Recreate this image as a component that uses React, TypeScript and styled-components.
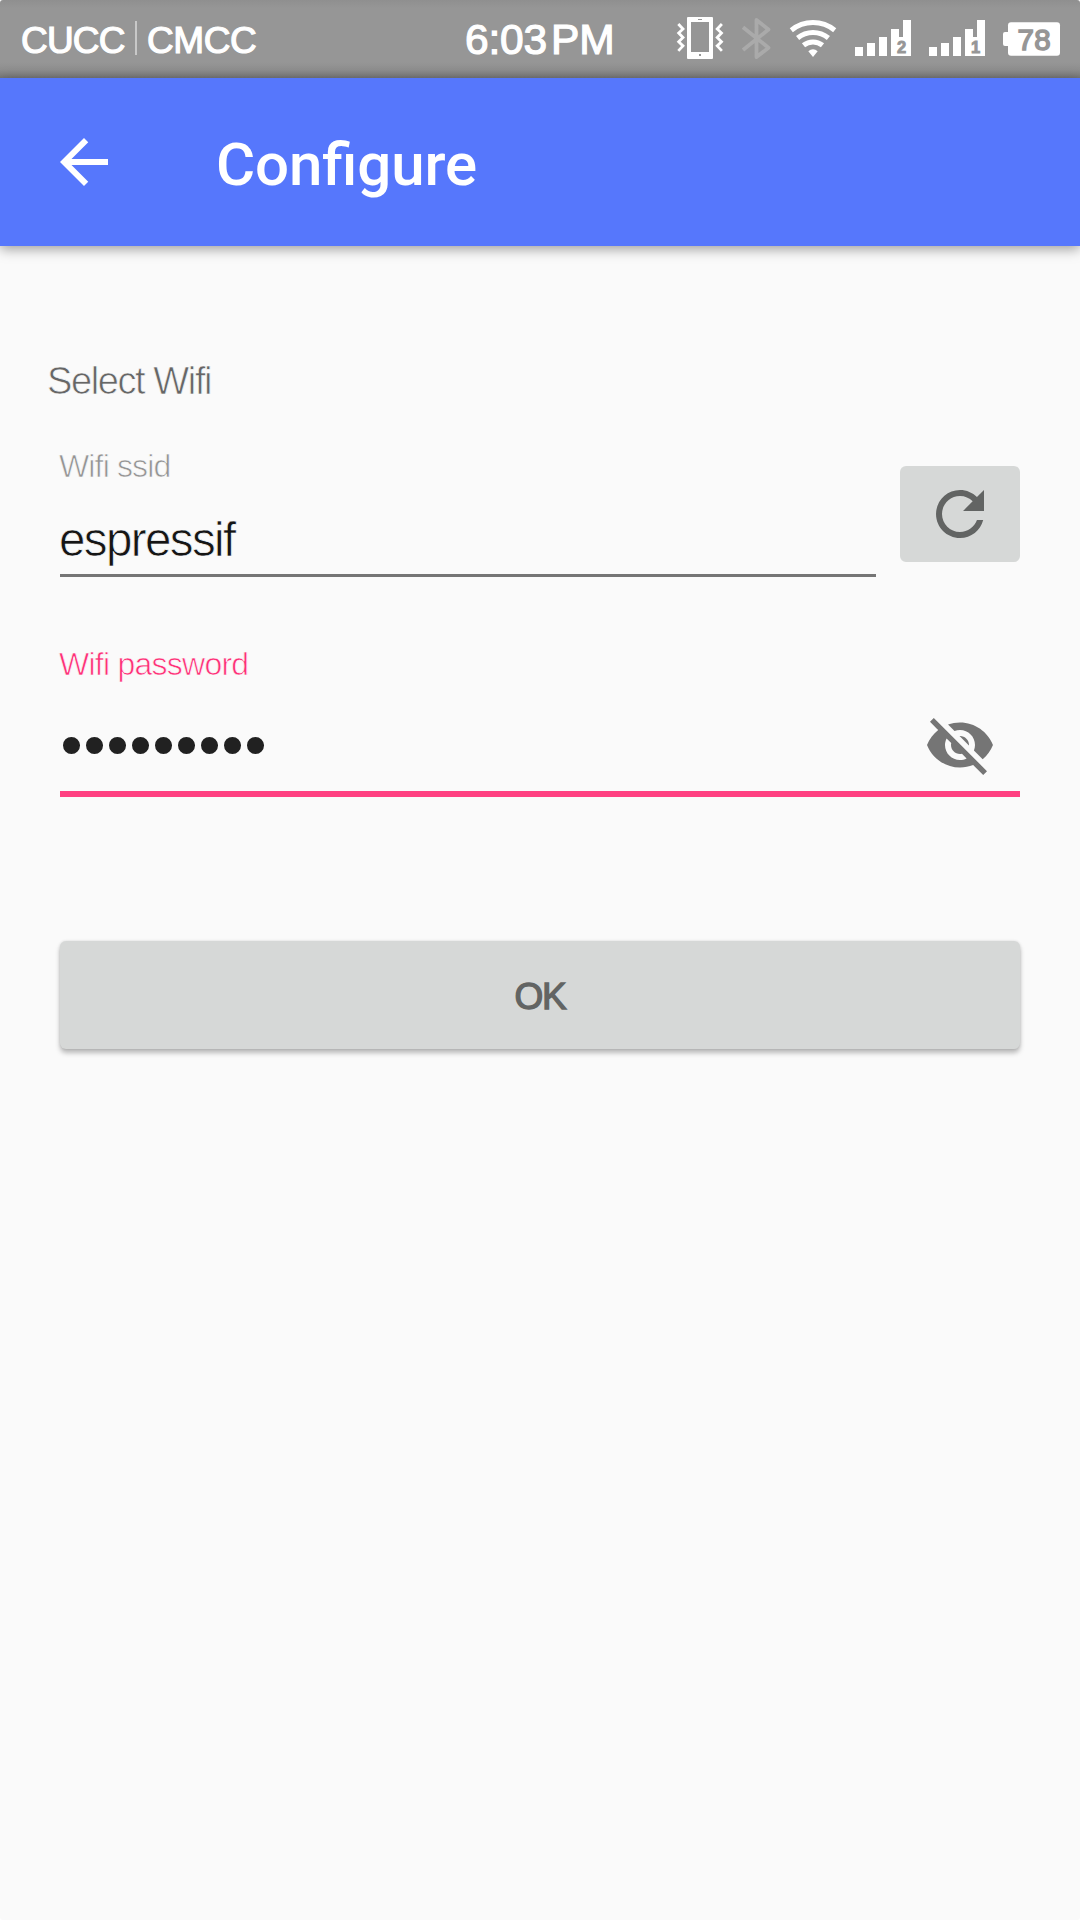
import React from "react";
import styled, { createGlobalStyle } from "styled-components";

const GlobalStyle = createGlobalStyle`
  * { box-sizing: border-box; }
  html, body { margin: 0; padding: 0; background: #fff; }
  svg { display: block; flex: none; }
`;

const SANS = `"Liberation Sans", Arial, sans-serif`;

const Screen = styled.div`
  width: 1080px;
  height: 1920px;
  display: flex;
  flex-direction: column;
  background: #fafafa;
  border-radius: 3px;
  overflow: hidden;
  font-family: ${SANS};
`;

const StatusBar = styled.header`
  height: 78px;
  flex: none;
  display: flex;
  padding-left: 21px;
  color: #fff;
  background: linear-gradient(
    to bottom,
    #8f8f8f 0,
    #969696 8px,
    #969696 62px,
    #8e8e8e 70px,
    #797979 78px
  );
`;

const StatusText = styled.span<{ $size: number; $width: number; $spacing?: number; $line?: number }>`
  width: ${(p) => p.$width}px;
  flex: none;
  font-size: ${(p) => p.$size}px;
  line-height: ${(p) => p.$line ?? 80}px;
  height: 78px;
  letter-spacing: ${(p) => p.$spacing ?? 0}px;
  white-space: nowrap;
  -webkit-text-stroke: 1.2px #fff;
`;

const Divider = styled.i`
  width: 2px;
  height: 34px;
  flex: none;
  margin: 21px 10px 0 8px;
  background: #c8c8c8;
`;

const StatusIcons = styled.div`
  display: flex;
  flex: none;
  margin-left: auto;
`;

const Toolbar = styled.nav`
  height: 168px;
  flex: none;
  display: flex;
  align-items: center;
  padding-left: 48px;
  background: #5677fc;
  box-shadow: 0 3px 12px rgba(0, 0, 0, 0.38);
`;

const Title = styled.h1`
  margin: 5px 0 0 96px;
  font-family: Roboto, sans-serif;
  font-size: 60px;
  line-height: 70px;
  font-weight: 500;
  letter-spacing: -0.1px;
  font-feature-settings: "liga" 1;
  color: #fff;
`;

const Form = styled.main`
  display: flex;
  flex-direction: column;
  padding: 115px 60px 0;
`;

const Thin = styled.span<{ $size: number; $line: number; $color: string; $spacing: number }>`
  display: block;
  margin-left: -1px;
  font-size: ${(p) => p.$size}px;
  line-height: ${(p) => p.$line}px;
  letter-spacing: ${(p) => p.$spacing}px;
  color: ${(p) => p.$color};
  white-space: nowrap;
  font-feature-settings: "liga" 1;
  -webkit-text-stroke: 0.7px #fafafa;
`;

const Heading = styled.div`
  margin-left: -12px;
  height: 40px;
`;

const SsidRow = styled.div`
  display: flex;
  justify-content: space-between;
  margin-top: 47px;
  height: 129px;
`;

const SsidField = styled.div`
  width: 816px;
  height: 129px;
  border-bottom: 3px solid #757575;
`;

const SsidValue = styled.div`
  margin-top: 28px;
`;

const RefreshButton = styled.button`
  width: 120px;
  height: 96px;
  margin-top: 18px;
  padding: 0;
  border: 0;
  border-radius: 6px;
  background: #d6d8d7;
  display: flex;
  align-items: center;
  justify-content: center;
`;

const PasswordField = styled.div`
  margin-top: 69px;
  height: 151px;
  border-bottom: 6px solid #ff4081;
`;

const PasswordRow = styled.div`
  display: flex;
  align-items: center;
  justify-content: space-between;
  height: 72px;
  margin-top: 27px;
  padding-right: 24px;
`;

const Dots = styled.span`
  margin: -2px 0 0 0.5px;
  font-size: 63px;
  line-height: 72px;
  letter-spacing: 0.95px;
  color: #212121;
`;

const OkButton = styled.button`
  margin-top: 144px;
  height: 108px;
  padding: 3px 0 0;
  border: 0;
  border-radius: 6px;
  background: #d6d8d7;
  box-shadow: 0 4px 5px rgba(0, 0, 0, 0.26), 0 0 3px rgba(0, 0, 0, 0.12);
  font-family: ${SANS};
  font-size: 37px;
  line-height: 40px;
  letter-spacing: -1.2px;
  color: #626463;
  -webkit-text-stroke: 1.3px #626463;
`;

const SignalIcon = ({ digit }: { digit: string }) => (
  <svg width="74" height="78" viewBox="0 0 74 78">
    <path
      fill="#fff"
      d="M0 47h8v9H0zM12 43h8v13h-8zM24 37h8v19h-8zM36 29h8v8h4V20h8v36H36z"
    />
    <text x="46.5" y="53" textAnchor="middle" fontFamily="Liberation Sans, sans-serif" fontWeight="700" fontSize="16.5" fill="#969696" stroke="#969696" strokeWidth="0.9">
      {digit}
    </text>
  </svg>
);

const PhoneIcon = () => (
  <svg width="64" height="78" viewBox="676 0 64 78">
    <path
      fill="#fff"
      fillRule="evenodd"
      d="M688 17h24q1 0 1 1v40q0 1-1 1h-24q-1 0-1-1V18q0-1 1-1zM691 22v30h18V22zM698 19v1h4v-1zM699 54v2h2v-2z"
    />
    <path
      fill="none"
      stroke="#fff"
      strokeWidth="2.8"
      d="M678.3 24l4.7 5-4.3 4 4.3 4.5-4.3 4.2 4.3 4.2-4.7 5M721.9 24l-4.7 5 4.3 4-4.3 4.5 4.3 4.2-4.3 4.2 4.7 5"
    />
  </svg>
);

const BluetoothIcon = () => (
  <svg width="48" height="78" viewBox="740 0 48 78">
    <path fill="none" stroke="#aaa" strokeWidth="3.8" strokeLinejoin="round" d="M743 27.2l25.5 20.6-12 9.2V20l12 9.5L743 50" />
  </svg>
);

const WifiIcon = () => (
  <svg width="67" height="78" viewBox="788 0 67 78">
    <g fill="none" stroke="#fff" strokeWidth="5">
      <path d="M791.3 30.2a34.5 34.5 0 0 1 43.4 0" />
      <path d="M797.6 38a24.5 24.5 0 0 1 30.8 0" />
      <path d="M803.5 45.3a15 15 0 0 1 19 0" />
    </g>
    <path fill="#fff" d="M808.3 51.2a7.5 7.5 0 0 1 9.4 0L813 57z" />
  </svg>
);

const BatteryIcon = () => (
  <svg width="77" height="78" viewBox="1003 0 77 78">
    <rect x="1008" y="22.3" width="52" height="33.4" rx="3" fill="#fff" />
    <rect x="1003" y="32" width="8" height="14" rx="2" fill="#fff" />
    <text x="1034.3" y="49.7" textAnchor="middle" fontFamily="Liberation Sans, sans-serif" fontSize="29.5" letterSpacing="0.4" fill="#969696" stroke="#969696" strokeWidth="1.5">
      78
    </text>
  </svg>
);

const MaterialIcon = ({ path, color }: { path: string; color: string }) => (
  <svg width="72" height="72" viewBox="0 0 24 24" fill={color}>
    <path d={path} />
  </svg>
);

const BACK = "M20 11H7.83l5.59-5.59L12 4l-8 8 8 8 1.41-1.41L7.83 13H20v-2z";
const REFRESH =
  "M17.65 6.35C16.2 4.9 14.21 4 12 4c-4.42 0-7.99 3.58-7.99 8s3.57 8 7.99 8c3.73 0 6.84-2.55 7.73-6h-2.08c-.82 2.33-3.04 4-5.65 4-3.31 0-6-2.69-6-6s2.69-6 6-6c1.66 0 3.14.69 4.22 1.78L13 11h7V4l-2.35 2.35z";
const EYE_OFF =
  "M12 7c2.76 0 5 2.24 5 5 0 .65-.13 1.26-.36 1.83l2.92 2.92c1.51-1.26 2.7-2.89 3.43-4.75-1.73-4.39-6-7.5-11-7.5-1.4 0-2.74.25-3.98.7l2.16 2.16C10.74 7.13 11.35 7 12 7zM2 4.27l2.28 2.28.46.46C3.08 8.3 1.78 10.02 1 12c1.73 4.39 6 7.5 11 7.5 1.55 0 3.03-.3 4.38-.84l.42.42L19.73 22 21 20.73 3.27 3 2 4.27zM7.53 9.8l1.55 1.55c-.05.21-.08.43-.08.65 0 1.66 1.34 3 3 3 .22 0 .44-.03.65-.08l1.55 1.55c-.67.33-1.41.53-2.2.53-2.76 0-5-2.24-5-5 0-.79.2-1.53.53-2.2zm4.31-.78l3.15 3.15.02-.16c0-1.66-1.34-3-3-3l-.17.01z";

export default function App() {
  return (
    <>
      <GlobalStyle />
      <Screen>
        <StatusBar>
          <StatusText $size={37} $width={106} $spacing={-0.8} $line={82}>CUCC</StatusText>
          <Divider />
          <StatusText $size={37} $width={318} $spacing={-0.4} $line={82}>CMCC</StatusText>
          <StatusText $size={42.5} $width={86} $spacing={-0.2}>6:03</StatusText>
          <StatusText $size={42.5} $width={70} $spacing={0}>PM</StatusText>
          <StatusIcons>
            <PhoneIcon />
            <BluetoothIcon />
            <WifiIcon />
            <SignalIcon digit="2" />
            <SignalIcon digit="1" />
            <BatteryIcon />
          </StatusIcons>
        </StatusBar>
        <Toolbar>
          <MaterialIcon path={BACK} color="#fff" />
          <Title>Configure</Title>
        </Toolbar>
        <Form>
          <Heading>
            <Thin $size={38} $line={40} $color="#666" $spacing={-1.4}>Select Wifi</Thin>
          </Heading>
          <SsidRow>
            <SsidField>
              <Thin $size={32} $line={36} $color="#949494" $spacing={-0.85}>Wifi ssid</Thin>
              <SsidValue>
                <Thin $size={47.5} $line={56} $color="#151515" $spacing={-1.6}>espressif</Thin>
              </SsidValue>
            </SsidField>
            <RefreshButton aria-label="Refresh">
              <MaterialIcon path={REFRESH} color="#626463" />
            </RefreshButton>
          </SsidRow>
          <PasswordField>
            <Thin $size={32} $line={36} $color="#ff2f76" $spacing={-0.75}>Wifi password</Thin>
            <PasswordRow>
              <Dots>•••••••••</Dots>
              <MaterialIcon path={EYE_OFF} color="#757575" />
            </PasswordRow>
          </PasswordField>
          <OkButton>OK</OkButton>
        </Form>
      </Screen>
    </>
  );
}
